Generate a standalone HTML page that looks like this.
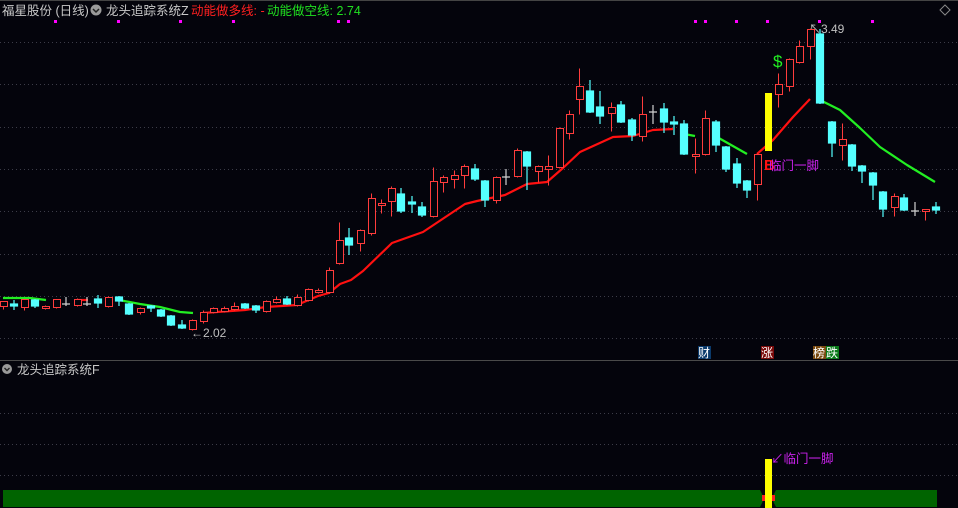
<!DOCTYPE html>
<html><head><meta charset="utf-8"><style>
body{margin:0;background:#04040c;width:958px;height:508px;overflow:hidden;font-family:"Liberation Sans","Noto Sans CJK SC",sans-serif}
svg{position:absolute;left:0;top:0}
text{font-family:"Liberation Sans","Noto Sans CJK SC",sans-serif}
</style></head><body>
<svg width="958" height="508" viewBox="0 0 958 508">
<rect width="958" height="508" fill="#04040c"/>
<line x1="0" y1="0.5" x2="958" y2="0.5" stroke="#444"/>
<g stroke="#3c3c48" stroke-dasharray="1 3">
<line x1="0" y1="42.5" x2="958" y2="42.5"/><line x1="0" y1="84.5" x2="958" y2="84.5"/>
<line x1="0" y1="127.5" x2="958" y2="127.5"/><line x1="0" y1="169.5" x2="958" y2="169.5"/>
<line x1="0" y1="211.5" x2="958" y2="211.5"/><line x1="0" y1="254.5" x2="958" y2="254.5"/>
<line x1="0" y1="296.5" x2="958" y2="296.5"/><line x1="0" y1="338.5" x2="958" y2="338.5"/>
<line x1="0" y1="413.5" x2="958" y2="413.5"/><line x1="0" y1="444.5" x2="958" y2="444.5"/>
<line x1="0" y1="475.5" x2="958" y2="475.5"/>
</g>
<line x1="0" y1="360.5" x2="958" y2="360.5" stroke="#4a4a4a"/>
<text x="2" y="15" font-size="12.5" fill="#c8c8c8">福星股份 (日线)</text>
<circle cx="96" cy="10" r="5.5" fill="#9a9a9a"/><path d="M93 9l3 3 3-3" stroke="#222" stroke-width="1.5" fill="none"/>
<text x="106" y="15" font-size="12.5" fill="#c8c8c8">龙头追踪系统Z</text>
<text x="191" y="15" font-size="12.5" fill="#ff2020">动能做多线: -</text>
<text x="267" y="15" font-size="12.5" fill="#20e020">动能做空线: 2.74</text>
<path d="M945 5l5 5-5 5-5-5z" stroke="#888" fill="none"/>
<g fill="#ff00ff">
<rect x="54" y="20" width="3" height="3"/><rect x="117" y="20" width="3" height="3"/><rect x="179" y="20" width="3" height="3"/><rect x="232" y="20" width="3" height="3"/><rect x="337" y="20" width="3" height="3"/><rect x="347" y="20" width="3" height="3"/>
<rect x="694" y="20" width="3" height="3"/><rect x="704" y="20" width="3" height="3"/><rect x="735" y="20" width="3" height="3"/><rect x="766" y="20" width="3" height="3"/><rect x="818" y="20" width="3" height="3"/><rect x="871" y="20" width="3" height="3"/>
</g>
<g fill="none" stroke-width="2.2" stroke-linejoin="round">
<polyline stroke="#22ee22" points="3,298 30,298 46,300"/>
<polyline stroke="#ff1010" points="77,300 88,300"/>
<polyline stroke="#22ee22" points="119,300 140,304 160,307 180,312 193,313"/>
<polyline stroke="#ff1010" points="203,313 245,310 266,307 297,305 318,296 329,293 340,284 351,280 363,271 392,243 423,232 465,204 477,201 505,195 527,184 547,182 563,168 580,152 613,137 633,136 653,130 673,129"/>
<polyline stroke="#22ee22" points="684,134 695,136"/>
<polyline stroke="#22ee22" points="717,137 747,154"/>
<polyline stroke="#ff1010" points="757,154 773,140 793,117 810,99"/>
<polyline stroke="#22ee22" points="820,100 840,110 860,128 880,147 907,165 935,182"/>
</g>
<rect x="765" y="93" width="7" height="58" fill="#ffff00"/>
<g stroke="#ff3c3c" stroke-width="1" fill="#04040c" transform="translate(0.5,0.5)">
<path d="M3 301V309M24 299V310M45 305V309M56 299V308M77 298V306M108 296V307M140 307V314M192 319V330M203 310V323M213 307V313M224 306V312M234 302V310M266 300V312M276 296V303M297 294V306M308 288V301M318 288V293M329 267V293M339 222V264M360 229V251M371 193V235M381 199V213M391 186V216M433 167V217M443 175V192M454 170V188M464 164V188M496 176V203M517 148V177M538 165V182M548 155V185M559 127V168M569 110V139M579 68V114M611 102V131M642 96V141M695 138V173M705 110V155M757 153V200M778 73V107M789 58V91M799 40V63M810 28V59M842 123V160M894 193V216M925 209V220"/>
<rect x="0" y="301" width="7" height="5"/><rect x="21" y="299" width="7" height="8"/><rect x="42" y="306" width="7" height="2"/><rect x="53" y="299" width="7" height="8"/><rect x="74" y="299" width="7" height="6"/><rect x="105" y="297" width="7" height="9"/><rect x="137" y="308" width="7" height="4"/><rect x="189" y="320" width="7" height="9"/><rect x="200" y="312" width="7" height="9"/><rect x="210" y="308" width="7" height="4"/><rect x="221" y="308" width="7" height="3"/><rect x="231" y="306" width="7" height="3"/><rect x="263" y="301" width="7" height="10"/><rect x="273" y="299" width="7" height="3"/><rect x="294" y="297" width="7" height="8"/><rect x="305" y="289" width="7" height="11"/><rect x="315" y="290" width="7" height="2"/><rect x="326" y="270" width="7" height="22"/><rect x="336" y="240" width="7" height="23"/><rect x="357" y="230" width="7" height="13"/><rect x="368" y="198" width="7" height="35"/><rect x="378" y="203" width="7" height="2"/><rect x="388" y="188" width="7" height="13"/><rect x="430" y="181" width="7" height="35"/><rect x="440" y="177" width="7" height="5"/><rect x="451" y="175" width="7" height="4"/><rect x="461" y="166" width="7" height="9"/><rect x="493" y="177" width="7" height="23"/><rect x="514" y="150" width="7" height="26"/><rect x="535" y="166" width="7" height="5"/><rect x="545" y="166" width="7" height="3"/><rect x="556" y="128" width="7" height="39"/><rect x="566" y="114" width="7" height="19"/><rect x="576" y="86" width="7" height="13"/><rect x="608" y="107" width="7" height="6"/><rect x="639" y="114" width="7" height="22"/><rect x="692" y="154" width="7" height="2"/><rect x="702" y="118" width="7" height="36"/><rect x="754" y="154" width="7" height="30"/><rect x="775" y="84" width="7" height="10"/><rect x="786" y="59" width="7" height="27"/><rect x="796" y="46" width="7" height="16"/><rect x="807" y="29" width="7" height="17"/><rect x="839" y="139" width="7" height="6"/><rect x="891" y="196" width="7" height="11"/><rect x="922" y="209" width="7" height="2"/>
</g>
<g stroke="#55ffff" stroke-width="1.2" fill="#55ffff">
<path d="M14 300V310M35 299V308M98 295V308M119 296V306M129 303V315M151 305V312M161 309V317M171 315V326M182 320V329M245 303V309M256 305V313M287 296V305M349 228V255M401 188V213M412 196V213M422 202V217M475 164V181M485 180V207M527 151V190M590 80V113M600 91V124M621 101V123M632 118V141M664 103V133M674 116V135M684 120V155M716 120V152M726 146V172M737 158V188M747 180V198M820 29V104M832 121V157M852 144V171M862 165V183M873 172V200M883 191V217M904 194V211M936 202V214"/>
<rect x="10.5" y="304" width="7" height="2"/><rect x="31.5" y="300" width="7" height="6"/><rect x="94.5" y="299" width="7" height="4"/><rect x="115.5" y="297" width="7" height="4"/><rect x="125.5" y="304" width="7" height="10"/><rect x="147.5" y="306" width="7" height="2"/><rect x="157.5" y="310" width="7" height="6"/><rect x="167.5" y="316" width="7" height="9"/><rect x="178.5" y="325" width="7" height="3"/><rect x="241.5" y="304" width="7" height="4"/><rect x="252.5" y="306" width="7" height="4"/><rect x="283.5" y="299" width="7" height="5"/><rect x="345.5" y="238" width="7" height="7"/><rect x="397.5" y="194" width="7" height="17"/><rect x="408.5" y="202" width="7" height="2"/><rect x="418.5" y="207" width="7" height="8"/><rect x="471.5" y="169" width="7" height="10"/><rect x="481.5" y="181" width="7" height="19"/><rect x="523.5" y="152" width="7" height="14"/><rect x="586.5" y="91" width="7" height="21"/><rect x="596.5" y="107" width="7" height="9"/><rect x="617.5" y="105" width="7" height="17"/><rect x="628.5" y="120" width="7" height="15"/><rect x="660.5" y="109" width="7" height="13"/><rect x="670.5" y="122" width="7" height="2"/><rect x="680.5" y="124" width="7" height="30"/><rect x="712.5" y="122" width="7" height="23"/><rect x="722.5" y="147" width="7" height="22"/><rect x="733.5" y="164" width="7" height="19"/><rect x="743.5" y="181" width="7" height="9"/><rect x="816.5" y="34" width="7" height="69"/><rect x="828.5" y="122" width="7" height="21"/><rect x="848.5" y="145" width="7" height="21"/><rect x="858.5" y="166" width="7" height="5"/><rect x="869.5" y="173" width="7" height="12"/><rect x="879.5" y="192" width="7" height="17"/><rect x="900.5" y="198" width="7" height="12"/><rect x="932.5" y="207" width="7" height="3"/>
</g>
<g stroke="#d0d0d0" stroke-width="1.2">
<path d="M66 297V306M62 304H70M87 297V306M83 304H91M506 169V185M502 177H510M653 105V124M649 112H657M915 202V216M911 211H919"/>
</g>
<text x="773" y="67" font-size="17" fill="#22ee22">$</text>
<text x="764" y="170" font-size="15" font-weight="bold" fill="#ff1010">B</text>
<text x="769" y="170" font-size="12.5" fill="#cc22ee">临门一脚</text>
<text x="809" y="33" font-size="12" fill="#c0c0c0">↖3.49</text>
<text x="191" y="337" font-size="12" fill="#c0c0c0">←2.02</text>
<rect x="698" y="346" width="13" height="13" fill="#0b3a6b"/><text x="698" y="357" font-size="12" fill="#fff">财</text>
<rect x="761" y="346" width="13" height="13" fill="#7a0a0a"/><text x="761" y="357" font-size="12" fill="#fff">涨</text>
<rect x="813" y="346" width="13" height="13" fill="#7a4a10"/><text x="813" y="357" font-size="12" fill="#fff">榜</text>
<rect x="826" y="346" width="13" height="13" fill="#0a7a1a"/><text x="826" y="357" font-size="12" fill="#fff">跌</text>
<circle cx="7" cy="369" r="5" fill="#9a9a9a"/><path d="M4.5 368l2.5 2.5 2.5-2.5" stroke="#222" stroke-width="1.4" fill="none"/>
<text x="17" y="374" font-size="12.5" fill="#c8c8c8">龙头追踪系统F</text>
<path d="M3 490H760L763 496V501L760 507H3Z" fill="#006400"/>
<path d="M776 490H937V507H776L773 501V496Z" fill="#006400"/>
<rect x="762" y="495" width="13" height="6" fill="#ff2020"/>
<rect x="765" y="459" width="7" height="49" fill="#ffff00"/>
<text x="771" y="463" font-size="12.5" fill="#cc22ee">↙临门一脚</text>
</svg>
</body></html>
